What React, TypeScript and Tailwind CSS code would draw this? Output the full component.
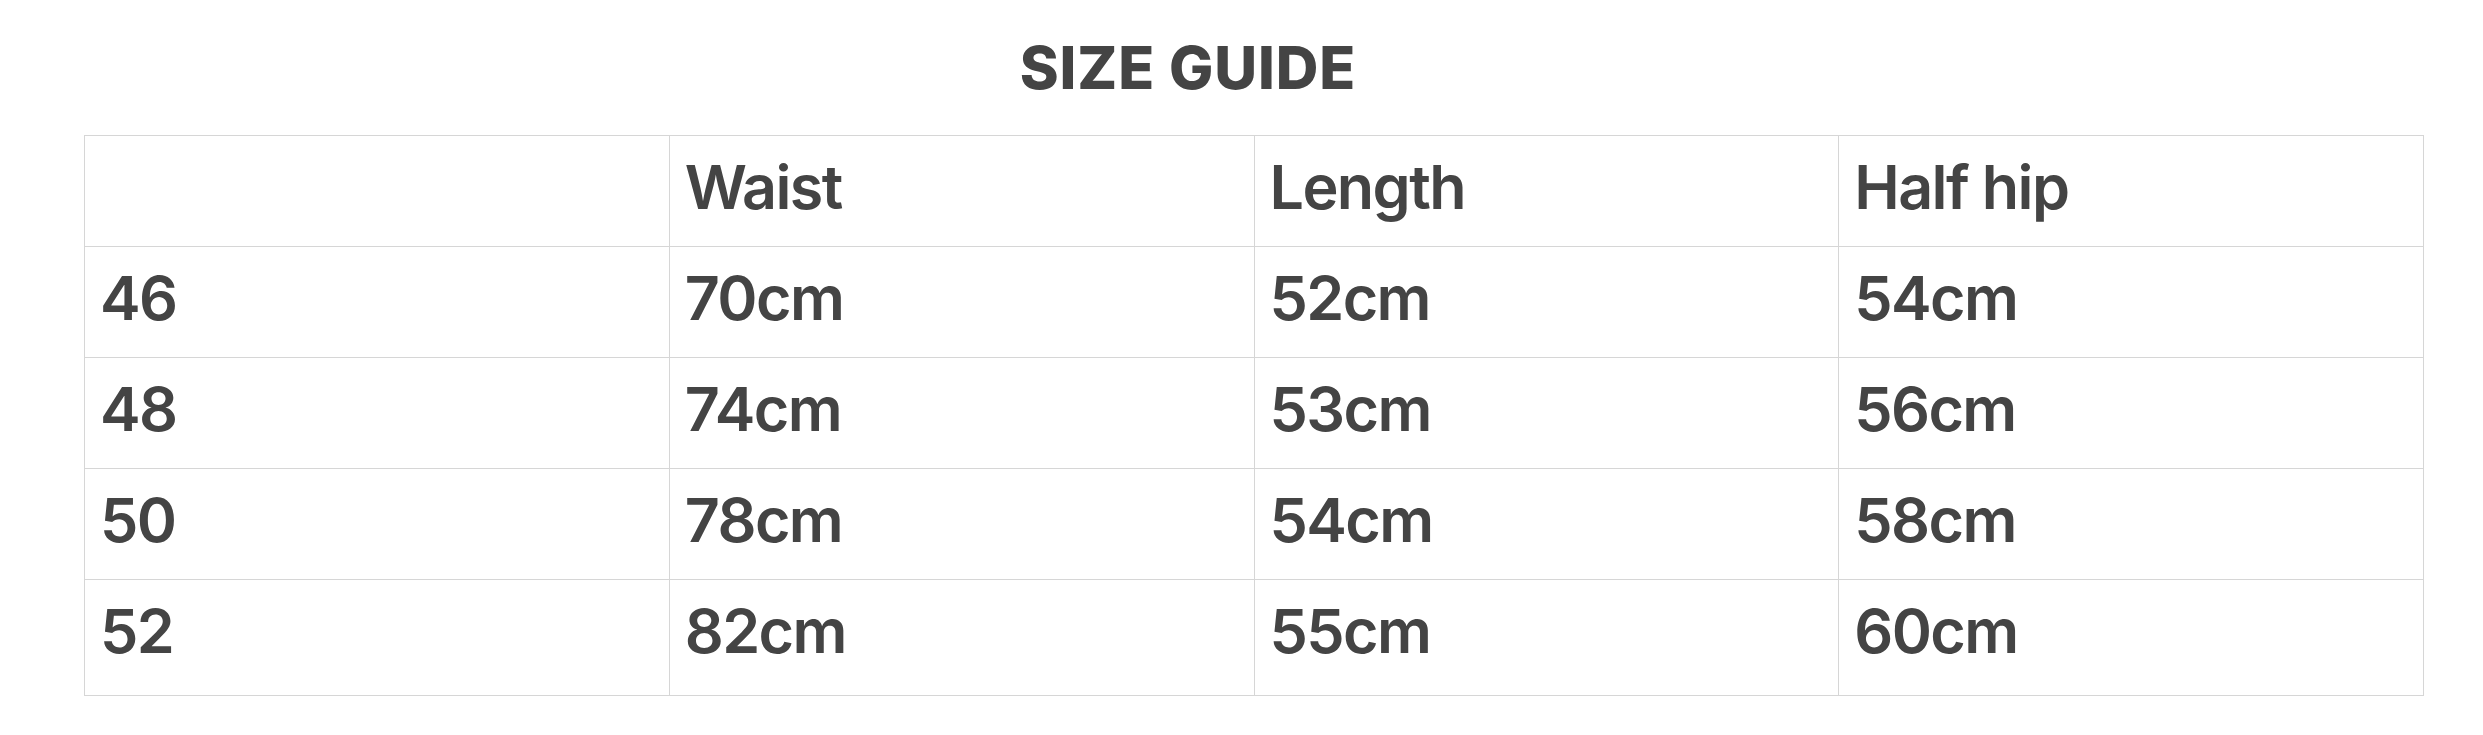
import React from "react";

const header = ["", "Waist", "Length", "Half hip"];
const rows = [
  ["46", "70cm", "52cm", "54cm"],
  ["48", "74cm", "53cm", "56cm"],
  ["50", "78cm", "54cm", "58cm"],
  ["52", "82cm", "55cm", "60cm"],
];

export default function App() {
  const all = [header, ...rows];
  return (
    <div
      className="w-[2483px] h-[735px] bg-white text-[#444444] overflow-hidden"
      style={{ fontFamily: "Inter, 'Noto Sans', sans-serif" }}
    >
      <div className="flex justify-center pr-[107px] pt-[32px]">
        <h1 className="text-[59px] leading-[71px] font-extrabold tracking-[0.9px]">SIZE GUIDE</h1>
      </div>
      <div className="ml-[84px] mt-[32px] w-[2340px] border-l border-t border-[#d6d6d6] grid grid-cols-4">
        {all.map((r, i) =>
          r.map((c, j) => (
            <div
              key={`${i}-${j}`}
              className={`border-r border-b border-[#d6d6d6] pl-[15px] pt-[14px] text-[61px] leading-[74px] font-semibold tracking-[-1.6px] ${
                i === all.length - 1 ? "h-[116px]" : "h-[111px]"
              }`}
            >
              {c}
            </div>
          ))
        )}
      </div>
    </div>
  );
}
